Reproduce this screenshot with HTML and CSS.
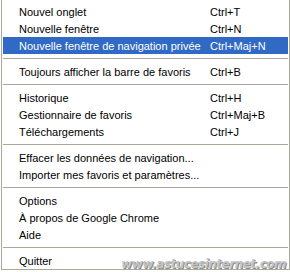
FILE: index.html
```html
<!DOCTYPE html>
<html lang="fr">

<head>
  <meta charset="UTF-8">
  <meta name="viewport" content="width=device-width, initial-scale=1.0">
  <title>Menu Chrome</title>
  <link rel="stylesheet" href="styles.css">
</head>

<body>
  <div class="menu">
    <div class="item"><span class="label">Nouvel onglet</span><span class="key">Ctrl+T</span></div>
    <div class="item"><span class="label">Nouvelle fenêtre</span><span class="key">Ctrl+N</span></div>
    <div class="item active"><span class="label">Nouvelle fenêtre de navigation privée</span><span class="key">Ctrl+Maj+N</span></div>
    <div class="sep"></div>
    <div class="item"><span class="label">Toujours afficher la barre de favoris</span><span class="key">Ctrl+B</span></div>
    <div class="sep"></div>
    <div class="item"><span class="label">Historique</span><span class="key">Ctrl+H</span></div>
    <div class="item"><span class="label">Gestionnaire de favoris</span><span class="key">Ctrl+Maj+B</span></div>
    <div class="item"><span class="label">Téléchargements</span><span class="key">Ctrl+J</span></div>
    <div class="sep"></div>
    <div class="item"><span class="label">Effacer les données de navigation...</span></div>
    <div class="item"><span class="label">Importer mes favoris et paramètres...</span></div>
    <div class="sep"></div>
    <div class="item"><span class="label">Options</span></div>
    <div class="item"><span class="label">À propos de Google Chrome</span></div>
    <div class="item"><span class="label">Aide</span></div>
    <div class="sep"></div>
    <div class="item"><span class="label">Quitter</span></div>
    <div class="watermark">www.astucesinternet.com</div>
  </div>
</body>

</html>
```

FILE: styles.css
```css
body {
  font-family: "Liberation Sans", Arial, sans-serif;
  font-size: 11px;
  margin: 0;
  padding: 0;
  background-color: white;
  color: black;
}

.menu {
  position: relative;
  width: 285px;
  height: 266px;
  margin-left: 1px;
  padding: 3px 1px 0;
  border-left: 1px solid #aca899;
  border-right: 1px solid #aca899;
  border-bottom: 1px solid #aca899;
}

.item {
  display: flex;
  align-items: center;
  height: 17px;
  padding-left: 16px;
}

.item .label {
  width: 191px;
  white-space: nowrap;
}

.item.active {
  background-color: #316ac5;
  color: white;
}

.sep {
  height: 1px;
  margin: 4px 0;
  background-color: #aca899;
}

.watermark {
  position: absolute;
  right: 3px;
  bottom: -2px;
  font-family: "DejaVu Sans", sans-serif;
  font-size: 12px;
  font-weight: bold;
  font-style: italic;
  color: #c4c4c4;
  text-shadow: 1px 1px 0 #8c8c8c;
  letter-spacing: -0.5px;
}
```
